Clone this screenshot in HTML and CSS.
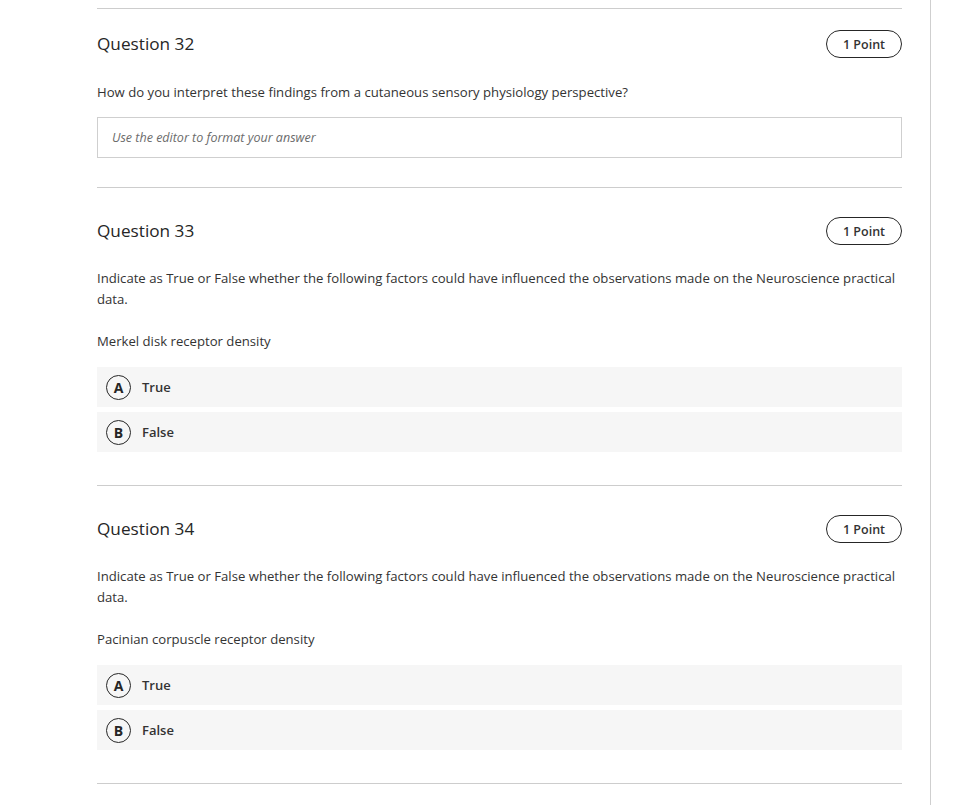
FILE: index.html
```html
<!DOCTYPE html>
<html>
<head>
<meta charset="utf-8">
<link rel="stylesheet" href="styles.css">
</head>
<body>
<div class="page">
  <div class="content">
    <section class="question first">
      <div class="q-head">
        <h2 class="q-title">Question 32</h2>
        <span class="badge">1 Point</span>
      </div>
      <p class="q-text q-text-32">How do you interpret these findings from a cutaneous sensory physiology perspective?</p>
      <div class="editor">Use the editor to format your answer</div>
    </section>
    <section class="question">
      <div class="q-head">
        <h2 class="q-title">Question 33</h2>
        <span class="badge">1 Point</span>
      </div>
      <p class="q-text">Indicate as True or False whether the following factors could have influenced the observations made on the Neuroscience practical data.</p>
      <p class="q-sub">Merkel disk receptor density</p>
      <div class="options">
        <div class="option"><span class="letter">A</span><span class="opt-label">True</span></div>
        <div class="option"><span class="letter">B</span><span class="opt-label">False</span></div>
      </div>
    </section>
    <section class="question">
      <div class="q-head">
        <h2 class="q-title">Question 34</h2>
        <span class="badge">1 Point</span>
      </div>
      <p class="q-text">Indicate as True or False whether the following factors could have influenced the observations made on the Neuroscience practical data.</p>
      <p class="q-sub">Pacinian corpuscle receptor density</p>
      <div class="options">
        <div class="option"><span class="letter">A</span><span class="opt-label">True</span></div>
        <div class="option"><span class="letter">B</span><span class="opt-label">False</span></div>
      </div>
    </section>
    <div class="end-rule"></div>
  </div>
</div>
</body>
</html>
```
FILE: styles.css
```css
html, body {
  margin: 0;
  padding: 0;
  background: #fff;
}
body {
  font-family: "Open Sans", "Noto Sans", sans-serif;
  color: #262626;
  overflow: hidden;
}
.page {
  width: 930px;
  height: 805px;
  border-right: 1px solid #cfcfcf;
  box-sizing: content-box;
}
.content {
  margin-left: 97px;
  width: 805px;
  padding-top: 8px;
}
.question {
  border-top: 1px solid #cdcdcd;
  padding-top: 29px;
  padding-bottom: 33px;
}
.question.first {
  padding-top: 21px;
  padding-bottom: 29px;
}
.q-head {
  display: flex;
  align-items: center;
  justify-content: space-between;
  height: 28px;
}
.q-title {
  margin: 0;
  font-size: 17.2px;
  font-weight: 500;
  color: #262626;
  line-height: 28px;
}
.badge {
  box-sizing: border-box;
  height: 28px;
  width: 76px;
  border: 1px solid #262626;
  border-radius: 14px;
  font-size: 12.5px;
  font-weight: 600;
  color: #333;
  display: flex;
  align-items: center;
  justify-content: center;
}
.q-text {
  margin: 23px 0 0;
  font-size: 13.15px;
  line-height: 21px;
  color: #333;
}
.q-text-32 {
  margin-top: 24px;
}
.q-sub {
  margin: 21px 0 0;
  font-size: 13.15px;
  line-height: 21px;
  color: #333;
}
.editor {
  margin-top: 14px;
  box-sizing: border-box;
  height: 41px;
  border: 1px solid #cfcfcf;
  padding-left: 14px;
  display: flex;
  align-items: center;
  font-size: 12.5px;
  font-style: italic;
  color: #6b6b6b;
}
.options {
  margin-top: 15px;
  display: flex;
  flex-direction: column;
  gap: 5px;
}
.option {
  height: 40px;
  background: #f6f6f6;
  display: flex;
  align-items: center;
  padding-left: 9px;
}
.letter {
  box-sizing: border-box;
  width: 25px;
  height: 25px;
  border: 1px solid #262626;
  border-radius: 50%;
  display: flex;
  align-items: center;
  justify-content: center;
  font-size: 14px;
  font-weight: 700;
  color: #262626;
}
.opt-label {
  margin-left: 11px;
  font-size: 13px;
  font-weight: 600;
  color: #333;
}
.end-rule {
  border-top: 1px solid #cdcdcd;
}
```
